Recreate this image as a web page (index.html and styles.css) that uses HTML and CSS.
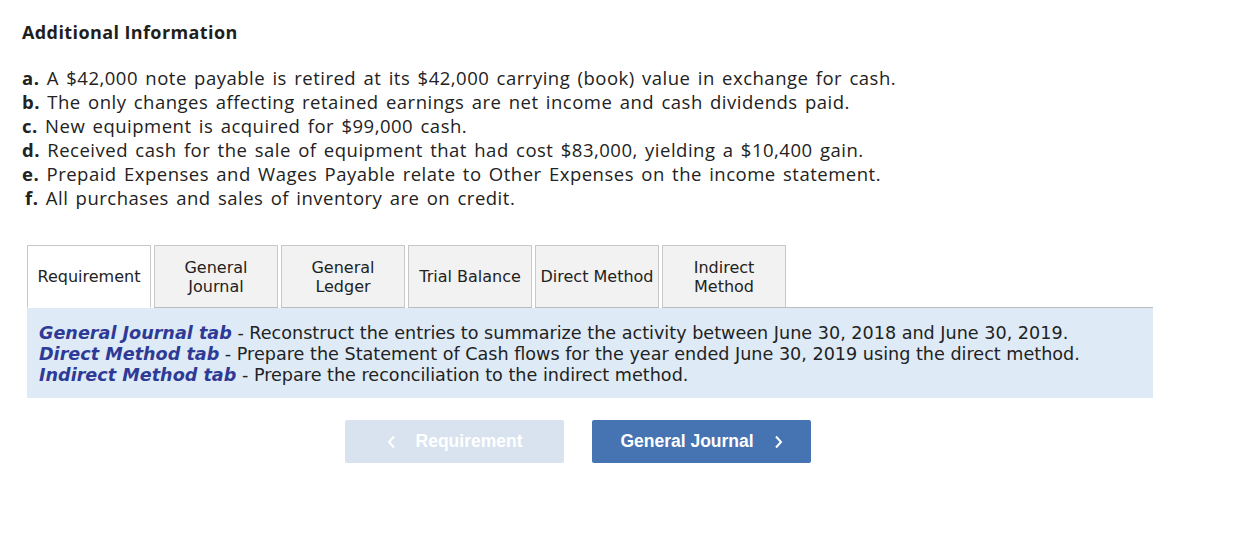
FILE: index.html
```html
<!DOCTYPE html>
<html>
<head>
<meta charset="utf-8">
<link rel="stylesheet" href="styles.css">
</head>
<body>
<div class="page">
  <h2 class="title">Additional Information</h2>
  <ul class="info">
    <li><b>a.</b> A $42,000 note payable is retired at its $42,000 carrying (book) value in exchange for cash.</li>
    <li><b>b.</b> The only changes affecting retained earnings are net income and cash dividends paid.</li>
    <li><b>c.</b> New equipment is acquired for $99,000 cash.</li>
    <li><b>d.</b> Received cash for the sale of equipment that had cost $83,000, yielding a $10,400 gain.</li>
    <li><b>e.</b> Prepaid Expenses and Wages Payable relate to Other Expenses on the income statement.</li>
    <li class="f"><b>f.</b> All purchases and sales of inventory are on credit.</li>
  </ul>
  <div class="tabwrap">
    <div class="tabs">
      <div class="tab active">Requirement</div>
      <div class="tab">General<br>Journal</div>
      <div class="tab">General<br>Ledger</div>
      <div class="tab">Trial Balance</div>
      <div class="tab">Direct Method</div>
      <div class="tab">Indirect<br>Method</div>
      <div class="tabfill"></div>
    </div>
    <div class="panel">
      <p><i class="key">General Journal tab</i> - Reconstruct the entries to summarize the activity between June 30, 2018 and June 30, 2019.</p>
      <p><i class="key">Direct Method tab</i> - Prepare the Statement of Cash flows for the year ended June 30, 2019 using the direct method.</p>
      <p><i class="key">Indirect Method tab</i> - Prepare the reconciliation to the indirect method.</p>
    </div>
  </div>
  <div class="nav">
    <button class="btn prev"><svg class="chev" width="9" height="14" viewBox="0 0 9 14"><polyline points="7,1.5 2,7 7,12.5" fill="none" stroke="#fff" stroke-width="2"/></svg><span>Requirement</span></button>
    <button class="btn next"><span>General Journal</span><svg class="chev" width="9" height="14" viewBox="0 0 9 14"><polyline points="2,1.5 7,7 2,12.5" fill="none" stroke="#fff" stroke-width="2"/></svg></button>
  </div>
</div>
</body>
</html>
```
FILE: styles.css
```css
* { box-sizing: border-box; }
html, body { margin: 0; padding: 0; background: #fff; }
.page { padding: 20px 0 0 22px; width: 1242px; }
.title {
  margin: 0;
  font-family: "Open Sans", "Liberation Sans", sans-serif;
  font-weight: 700;
  font-size: 18px;
  letter-spacing: 0.4px;
  line-height: 24px;
  color: #1e1e1e;
}
.info {
  list-style: none;
  margin: 22px 0 0 0;
  padding: 0;
  font-family: "Open Sans", "Liberation Sans", sans-serif;
  font-size: 18.5px;
  letter-spacing: 0.5px;
  word-spacing: 2px;
  line-height: 24px;
  color: #222;
}
.info b { font-weight: 700; }
.info .f { padding-left: 3px; }
.tabwrap { margin: 35px 0 0 5px; width: 1126px; }
.tabs { display: flex; gap: 3px; align-items: flex-end; }
.tab {
  width: 124px;
  height: 63px;
  display: flex;
  align-items: center;
  justify-content: center;
  text-align: center;
  font-family: "DejaVu Sans", Verdana, sans-serif;
  font-size: 16px;
  line-height: 19px;
  color: #222;
  background: #f2f2f2;
  border: 1px solid #c8c8c8;
  border-bottom: 1px solid #bcbcbc;
}
.tab.active { background: #fff; border-bottom-color: #fff; }
.tabfill { flex: 1; border-bottom: 1px solid #bcbcbc; height: 63px; margin-left: -3px; }
.panel {
  background: #deebf7;
  padding: 15px 12px 12px 12px;
  font-family: "DejaVu Sans", Verdana, sans-serif;
  font-size: 17.6px;
  line-height: 21px;
  color: #222;
}
.panel p { margin: 0; white-space: nowrap; }
.key { font-weight: 700; color: #2e3a96; }
.nav { display: flex; gap: 28px; margin: 22px 0 0 323px; }
.btn {
  width: 219px;
  height: 43px;
  border: none;
  border-radius: 2px;
  font-family: "Liberation Sans", Arial, sans-serif;
  font-weight: 700;
  font-size: 17.5px;
  color: #fff;
  display: flex;
  align-items: center;
  justify-content: center;
  gap: 20px;
  padding: 0;
}
.prev { background: #d8e3ef; }
.next { background: #4674b3; }
```
